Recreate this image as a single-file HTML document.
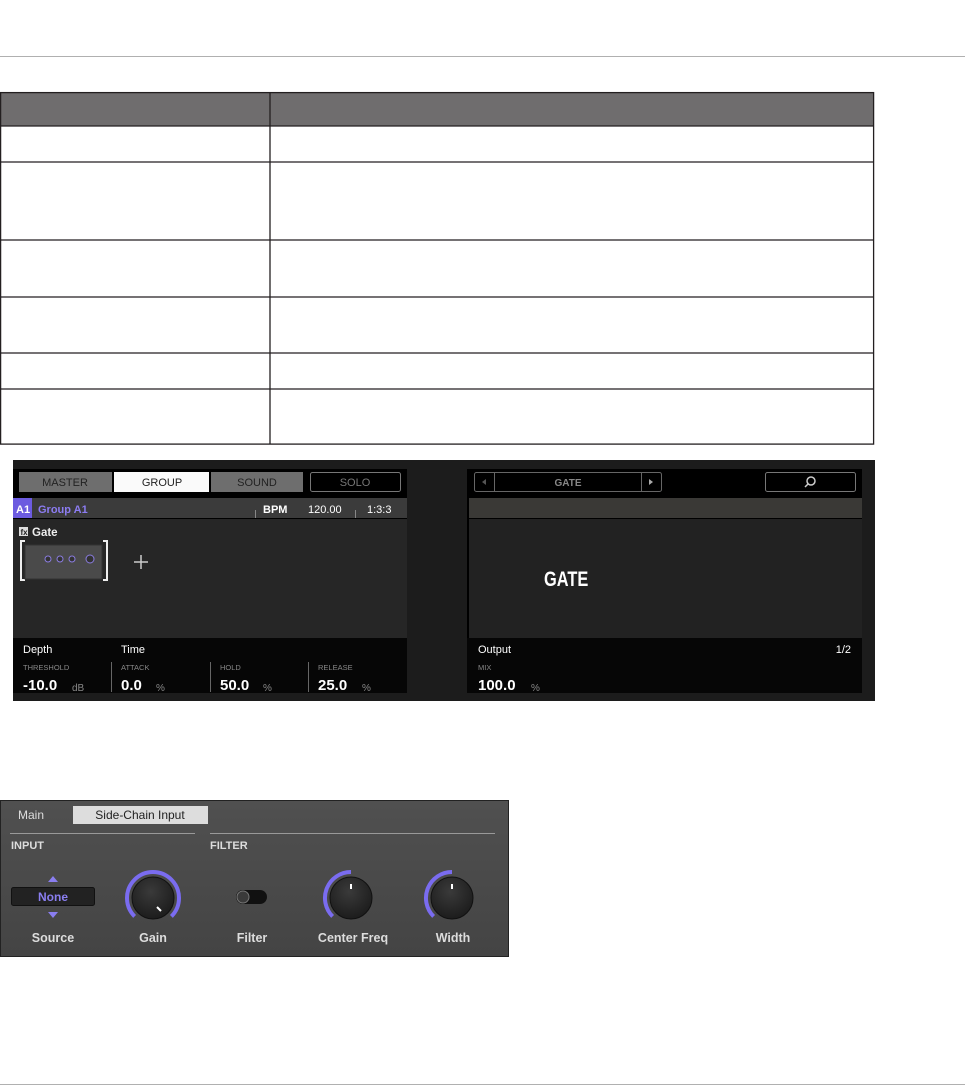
<!DOCTYPE html>
<html><head><style>
body{margin:0;width:965px;height:1086px;background:#fff;position:relative;overflow:hidden;font-family:"Liberation Sans",sans-serif}
.a{position:absolute}
</style></head><body>
<div class="a" style="left:0;top:56px;width:965px;height:1px;background:#b0b0b0"></div>
<div class="a" style="left:0;top:1084px;width:965px;height:1px;background:#b0b0b0"></div>

<svg class="a" style="left:0;top:0" width="965" height="460">
<rect x="0" y="93" width="874" height="33" fill="#6f6d6e"/>
<g stroke="#231f20" stroke-width="1.3" fill="none">
<rect x="0.6" y="92.6" width="873" height="351.5"/>
<line x1="270" y1="93" x2="270" y2="444"/>
<line x1="0" y1="126" x2="874" y2="126"/>
<line x1="0" y1="162" x2="874" y2="162"/>
<line x1="0" y1="240" x2="874" y2="240"/>
<line x1="0" y1="297" x2="874" y2="297"/>
<line x1="0" y1="353" x2="874" y2="353"/>
<line x1="0" y1="389" x2="874" y2="389"/>
</g>
</svg>

<svg class="a" style="left:0;top:460px" width="965" height="245" font-family="Liberation Sans,sans-serif">
<rect x="13" y="0" width="862" height="241" fill="#1c1c1c"/>
<!-- left panel -->
<rect x="13" y="9" width="394" height="224" fill="#000"/>
<rect x="19" y="12" width="93" height="20" fill="#6e6e6e"/>
<rect x="114" y="12" width="95" height="20" fill="#fafafa"/>
<rect x="211" y="12" width="92" height="20" fill="#6e6e6e"/>
<rect x="310.5" y="12.5" width="90" height="19" rx="2" fill="none" stroke="#777"/>
<g font-size="11" text-anchor="middle">
<text x="65" y="26" fill="#222">MASTER</text>
<text x="162" y="26" fill="#222">GROUP</text>
<text x="257" y="26" fill="#222">SOUND</text>
<text x="355" y="26" fill="#777">SOLO</text>
</g>
<rect x="13" y="38" width="394" height="20" fill="#3b3b3b"/>
<rect x="13" y="38" width="19" height="20" fill="#6c5be0"/>
<text x="16" y="53" font-size="11" font-weight="bold" fill="#fff">A1</text>
<text x="38" y="53" font-size="11" font-weight="bold" fill="#8c7cf2">Group A1</text>
<line x1="255.5" y1="50" x2="255.5" y2="58" stroke="#888"/>
<line x1="355.5" y1="50" x2="355.5" y2="58" stroke="#888"/>
<text x="263" y="53" font-size="11" font-weight="bold" fill="#fff">BPM</text>
<text x="308" y="53" font-size="11" fill="#fff">120.00</text>
<text x="367" y="53" font-size="11" fill="#fff">1:3:3</text>
<rect x="13" y="58" width="394" height="1" fill="#000"/>
<rect x="13" y="59" width="394" height="119" fill="#262626"/>
<rect x="19" y="67" width="9" height="9" fill="#ddd"/>
<text x="20.5" y="75" font-size="8" font-weight="bold" fill="#222">fx</text>
<text x="32" y="76" font-size="11.5" font-weight="bold" fill="#eee">Gate</text>
<path d="M25 81 H21 V120 H25 M103 81 H107 V120 H103" stroke="#eee" stroke-width="2" fill="none"/>
<rect x="25" y="85" width="77" height="34" fill="#4a4a4a" stroke="#333"/>
<g fill="#333" stroke="#8a7ce0" stroke-width="1"><circle cx="48" cy="99" r="3"/><circle cx="60" cy="99" r="3"/><circle cx="72" cy="99" r="3"/><circle cx="90" cy="99" r="4"/></g>
<path d="M134 102 H148 M141 95 V109" stroke="#ccc" stroke-width="1.5"/>
<rect x="13" y="178" width="394" height="55" fill="#060606"/>
<text x="23" y="193" font-size="11" fill="#fff">Depth</text>
<text x="121" y="193" font-size="11" fill="#fff">Time</text>
<g font-size="7.5" fill="#888"><text x="23" y="210">THRESHOLD</text><text x="121" y="210">ATTACK</text><text x="220" y="210">HOLD</text><text x="318" y="210">RELEASE</text></g>
<g stroke="#666"><line x1="111.5" y1="202" x2="111.5" y2="232"/><line x1="210.5" y1="202" x2="210.5" y2="232"/><line x1="308.5" y1="202" x2="308.5" y2="232"/></g>
<g font-size="15" font-weight="bold" fill="#fff"><text x="23" y="230">-10.0</text><text x="121" y="230">0.0</text><text x="220" y="230">50.0</text><text x="318" y="230">25.0</text></g>
<g font-size="10" fill="#888"><text x="72" y="231">dB</text><text x="156" y="231">%</text><text x="263" y="231">%</text><text x="362" y="231">%</text></g>
<!-- right panel -->
<rect x="467" y="9" width="395" height="224" fill="#000"/>
<rect x="474.5" y="12.5" width="187" height="19" rx="2" fill="none" stroke="#666"/>
<line x1="494.5" y1="13" x2="494.5" y2="31" stroke="#666"/>
<line x1="641.5" y1="13" x2="641.5" y2="31" stroke="#666"/>
<path d="M486 19 L482 22 L486 25Z" fill="#555"/>
<path d="M649 19 L653 22 L649 25Z" fill="#aaa"/>
<text x="568" y="26" font-size="10" font-weight="bold" fill="#888" text-anchor="middle">GATE</text>
<rect x="765.5" y="12.5" width="90" height="19" rx="2" fill="none" stroke="#777"/>
<circle cx="811" cy="21" r="4" fill="none" stroke="#ccc" stroke-width="1.5"/>
<line x1="808" y1="24" x2="805" y2="27" stroke="#ccc" stroke-width="1.5"/>
<rect x="469" y="38" width="393" height="20" fill="#3a3936"/>
<rect x="469" y="59" width="393" height="119" fill="#222"/>
<text x="544" y="126" font-size="21" font-weight="bold" fill="#fff" transform="translate(544 0) scale(0.78 1) translate(-544 0)">GATE</text>
<rect x="467" y="178" width="395" height="55" fill="#060606"/>
<text x="478" y="193" font-size="11" fill="#fff">Output</text>
<text x="851" y="193" font-size="11" fill="#fff" text-anchor="end">1/2</text>
<text x="478" y="210" font-size="7.5" fill="#888">MIX</text>
<text x="478" y="230" font-size="15" font-weight="bold" fill="#fff">100.0</text>
<text x="531" y="231" font-size="10" fill="#888">%</text>
</svg>

<svg class="a" style="left:0;top:800px" width="510" height="158" font-family="Liberation Sans,sans-serif">
<defs>
<linearGradient id="bg" x1="0" y1="0" x2="0" y2="1"><stop offset="0" stop-color="#505050"/><stop offset="1" stop-color="#444"/></linearGradient>
<radialGradient id="kn" cx="0.45" cy="0.35" r="0.7"><stop offset="0" stop-color="#3a3a3a"/><stop offset="1" stop-color="#1a1a1a"/></radialGradient>
</defs>
<rect x="0.5" y="0.5" width="508" height="156" fill="url(#bg)" stroke="#222"/>
<text x="18" y="19" font-size="12" fill="#ddd">Main</text>
<rect x="73" y="6" width="135" height="18" fill="#ddd"/>
<text x="140" y="19" font-size="12" fill="#222" text-anchor="middle">Side-Chain Input</text>
<line x1="10" y1="33.5" x2="195" y2="33.5" stroke="#999"/>
<line x1="210" y1="33.5" x2="495" y2="33.5" stroke="#999"/>
<text x="11" y="49" font-size="11" font-weight="bold" fill="#ddd">INPUT</text>
<text x="210" y="49" font-size="11" font-weight="bold" fill="#ddd">FILTER</text>
<path d="M48 82 L53 76 L58 82Z M48 112 L53 118 L58 112Z" fill="#8a7ef0"/>
<rect x="11.5" y="87.5" width="83" height="18" rx="2" fill="#222" stroke="#111"/>
<text x="53" y="101" font-size="12" font-weight="bold" fill="#8a7ef0" text-anchor="middle">None</text>
<!-- Gain knob -->
<path d="M134.6 116.4 A26 26 0 1 1 171.4 116.4" fill="none" stroke="#7a6cf0" stroke-width="4"/>
<circle cx="153" cy="98" r="21" fill="url(#kn)" stroke="#111"/>
<line x1="157" y1="107" x2="161" y2="111" stroke="#fff" stroke-width="2"/>
<!-- toggle -->
<rect x="236" y="90" width="31" height="14" rx="7" fill="#111"/>
<circle cx="243" cy="97" r="6" fill="#3a3a3a" stroke="#777"/>
<!-- Center freq -->
<path d="M332.6 116.4 A26 26 0 0 1 351 72" fill="none" stroke="#7a6cf0" stroke-width="4"/>
<circle cx="351" cy="98" r="21" fill="url(#kn)" stroke="#111"/>
<line x1="351" y1="84" x2="351" y2="89" stroke="#fff" stroke-width="2"/>
<!-- Width -->
<path d="M433.6 116.4 A26 26 0 0 1 452 72" fill="none" stroke="#7a6cf0" stroke-width="4"/>
<circle cx="452" cy="98" r="21" fill="url(#kn)" stroke="#111"/>
<line x1="452" y1="84" x2="452" y2="89" stroke="#fff" stroke-width="2"/>
<g font-size="12.5" font-weight="bold" fill="#ddd" text-anchor="middle">
<text x="53" y="142">Source</text><text x="153" y="142">Gain</text><text x="252" y="142">Filter</text><text x="353" y="142">Center Freq</text><text x="453" y="142">Width</text>
</g>
</svg>
</body></html>
